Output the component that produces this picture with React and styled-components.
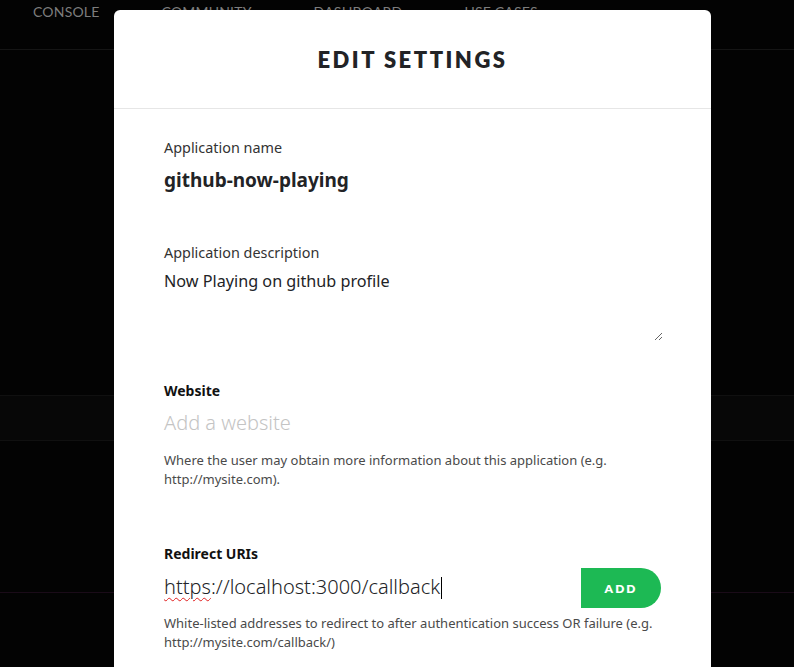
import styled, { createGlobalStyle } from 'styled-components'

const GlobalStyle = createGlobalStyle`
  html, body {
    margin: 0;
    padding: 0;
    background: #030303;
    font-family: "Noto Sans", Lato, sans-serif;
    overflow: hidden;
  }
`;

const Page = styled.div`
  position: relative;
  width: 794px;
  height: 667px;
  overflow: hidden;
  background: #030303;
`;

const NavBar = styled.nav`
  display: flex;
  gap: 62px;
  height: 50px;
  padding-left: 33px;
  border-bottom: 1px solid #151515;
  box-sizing: border-box;
`;

const NavItem = styled.span`
  font-family: Lato, sans-serif;
  font-size: 14px;
  line-height: 24px;
  color: #7d7d7d;
  letter-spacing: 0.2px;
`;

const Band = styled.div`
  margin-top: ${(p) => p.top}px;
  height: ${(p) => p.height}px;
  background: ${(p) => p.bg || 'transparent'};
  border-top: 1px solid ${(p) => p.line || '#101010'};
  border-bottom: ${(p) => (p.bottomLine ? `1px solid ${p.bottomLine}` : 'none')};
`;

const Modal = styled.div`
  position: absolute;
  top: 10px;
  left: 114px;
  width: 597px;
  height: 720px;
  background: #fff;
  border-radius: 6px;
  color: #222326;
`;

const Header = styled.header`
  height: 98px;
  border-bottom: 1px solid #e6e6e6;
  display: flex;
  align-items: center;
  justify-content: center;
`;

const Title = styled.h1`
  margin: 0;
  font-family: Lato, sans-serif;
  font-size: 22px;
  font-weight: 800;
  letter-spacing: 2.5px;
  color: #222326;
`;

const Body = styled.div`
  padding: 29px 50px 0 50px;
  display: flex;
  flex-direction: column;
`;

const Label = styled.div`
  font-size: ${(p) => (p.strong ? 14 : 14.4)}px;
  line-height: 20px;
  color: ${(p) => (p.strong ? '#111' : '#333')};
  font-weight: ${(p) => (p.strong ? 700 : 400)};
  margin-top: ${(p) => p.gap || 0}px;
`;

const Value = styled.div`
  margin-top: 10px;
  font-size: 19px;
  line-height: 24px;
  font-weight: 700;
  color: #222326;
`;

const TextArea = styled.textarea`
  margin-top: 7px;
  width: 499px;
  height: 71px;
  border: none;
  outline: none;
  padding: 0;
  font-family: "Noto Sans", Lato, sans-serif;
  font-size: 16.2px;
  line-height: 22px;
  color: #222326;
  background: transparent;
  resize: vertical;
`;

const Placeholder = styled.div`
  margin-top: 8px;
  font-size: 20px;
  line-height: 28px;
  font-weight: 300;
  color: #c4c4c4;
`;

const Help = styled.p`
  margin: ${(p) => p.gap || 14}px 0 0 0;
  font-size: 13px;
  line-height: 19px;
  color: #4a4a4a;
`;

const InputRow = styled.div`
  margin-top: 4px;
  display: flex;
  align-items: center;
  justify-content: space-between;
  height: 40px;
`;

const InputText = styled.div`
  font-size: 20px;
  font-weight: 300;
  color: #222326;
  display: flex;
  align-items: center;
  padding-bottom: 3px;
`;

const Misspelled = styled.span`
  text-decoration: underline wavy #e02020;
  text-decoration-thickness: 1px;
  text-underline-offset: 3px;
`;

const Caret = styled.span`
  display: inline-block;
  width: 1px;
  height: 22px;
  background: #000;
  margin-left: 1px;
  margin-top: 3px;
`;

const AddButton = styled.button`
  width: 80px;
  height: 40px;
  border: none;
  border-radius: 0 20px 20px 0;
  background: #1db954;
  color: #fff;
  font-family: Lato, sans-serif;
  font-size: 12px;
  font-weight: 800;
  letter-spacing: 2px;
  padding: 0;
`;

export default function App() {
  return (
    <Page>
      <GlobalStyle />
      <NavBar>
        <NavItem>CONSOLE</NavItem>
        <NavItem>COMMUNITY</NavItem>
        <NavItem>DASHBOARD</NavItem>
        <NavItem>USE CASES</NavItem>
      </NavBar>
      <Band top={345} height={44} bg="#070707" line="#101010" bottomLine="#101010" />
      <Band top={151} height={0} line="#1a0b18" />
      <Modal>
        <Header>
          <Title>EDIT SETTINGS</Title>
        </Header>
        <Body>
          <Label>Application name</Label>
          <Value>github-now-playing</Value>
          <Label gap={51}>Application description</Label>
          <TextArea defaultValue="Now Playing on github profile" spellCheck={false} />
          <Label strong gap={40}>Website</Label>
          <Placeholder>Add a website</Placeholder>
          <Help>
            Where the user may obtain more information about this application (e.g.
            <br />
            http://mysite.com).
          </Help>
          <Label strong gap={55}>Redirect URIs</Label>
          <InputRow>
            <InputText>
              <span>
                <Misspelled>https</Misspelled>://localhost:3000/callback
              </span>
              <Caret />
            </InputText>
            <AddButton>ADD</AddButton>
          </InputRow>
          <Help gap={6}>
            White-listed addresses to redirect to after authentication success OR failure (e.g.
            <br />
            http://mysite.com/callback/)
          </Help>
        </Body>
      </Modal>
    </Page>
  )
}
